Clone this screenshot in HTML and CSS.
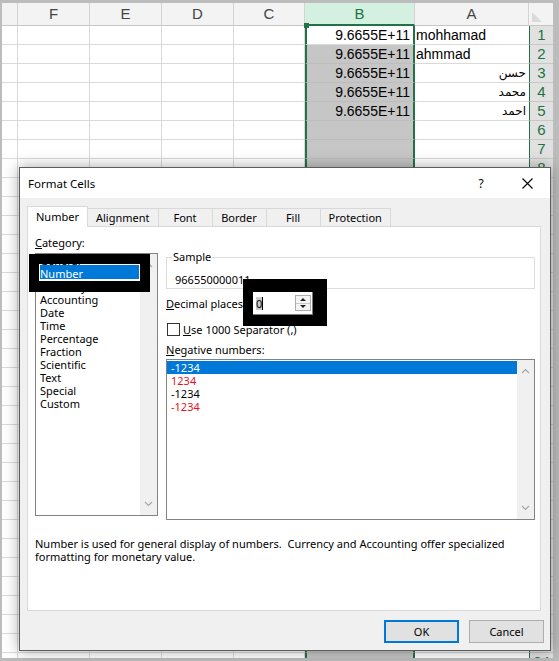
FILE: index.html
```html
<!DOCTYPE html>
<html lang="en">
<head>
    <meta charset="UTF-8">
    <meta name="viewport" content="width=device-width, initial-scale=1.0">
    <title>Format Cells</title>
    <link rel="stylesheet" href="styles.css">
</head>
<body>
    <div class="sheet">
        <div class="grid" id="grid"></div>
    </div>

    <div class="dialog">
        <div class="titlebar">
            <span class="title">Format Cells</span>
            <span class="help">?</span>
            <span class="close">
                <svg width="11" height="11" viewBox="0 0 11 11"><path d="M0.5 0.5 L10.5 10.5 M10.5 0.5 L0.5 10.5" stroke="#000" stroke-width="1.1" fill="none"/></svg>
            </span>
        </div>
        <div class="dlg-body">
            <div class="tabs">
                <div class="tab active">Number</div>
                <div class="tab">Alignment</div>
                <div class="tab">Font</div>
                <div class="tab">Border</div>
                <div class="tab">Fill</div>
                <div class="tab">Protection</div>
            </div>
            <div class="panel">
                <div class="columns">
                    <div class="cat-col">
                        <div class="lbl"><u>C</u>ategory:</div>
                        <div class="listbox cat-list">
                            <div class="items">
                                <div class="item">General</div>
                                <div class="item sel focus">Number</div>
                                <div class="item">Currency</div>
                                <div class="item">Accounting</div>
                                <div class="item">Date</div>
                                <div class="item">Time</div>
                                <div class="item">Percentage</div>
                                <div class="item">Fraction</div>
                                <div class="item">Scientific</div>
                                <div class="item">Text</div>
                                <div class="item">Special</div>
                                <div class="item">Custom</div>
                            </div>
                            <div class="vscroll">
                                <svg width="9" height="6" viewBox="0 0 9 6"><polyline points="1,5 4.5,1.5 8,5" fill="none" stroke="#a6a6a6" stroke-width="1.2"/></svg>
                                <svg width="9" height="6" viewBox="0 0 9 6"><polyline points="1,1 4.5,4.5 8,1" fill="none" stroke="#a6a6a6" stroke-width="1.2"/></svg>
                            </div>
                        </div>
                    </div>
                    <div class="opt-col">
                        <fieldset class="sample">
                            <legend>Sample</legend>
                            <div class="sample-val">966550000011</div>
                        </fieldset>
                        <div class="dec-row">
                            <label class="dec-label"><u>D</u>ecimal places:</label>
                            <div class="spin">
                                <span class="spin-val">0</span><span class="caret"></span>
                                <div class="spin-btns">
                                    <div class="spin-up"></div>
                                    <div class="spin-down"></div>
                                </div>
                            </div>
                        </div>
                        <div class="check-row">
                            <span class="checkbox"></span>
                            <span><u>U</u>se 1000 Separator (,)</span>
                        </div>
                        <div class="lbl neg-lbl"><u>N</u>egative numbers:</div>
                        <div class="listbox neg-list">
                            <div class="items">
                                <div class="item sel">-1234</div>
                                <div class="item red">1234</div>
                                <div class="item">-1234</div>
                                <div class="item red">-1234</div>
                            </div>
                            <div class="vscroll">
                                <svg width="9" height="6" viewBox="0 0 9 6"><polyline points="1,5 4.5,1.5 8,5" fill="none" stroke="#a6a6a6" stroke-width="1.2"/></svg>
                                <svg width="9" height="6" viewBox="0 0 9 6"><polyline points="1,1 4.5,4.5 8,1" fill="none" stroke="#a6a6a6" stroke-width="1.2"/></svg>
                            </div>
                        </div>
                    </div>
                </div>
                <p class="desc">Number is used for general display of numbers.&nbsp; Currency and Accounting offer specialized<br>formatting for monetary value.</p>
            </div>
            <div class="buttons">
                <button type="button" class="btn default">OK</button>
                <button type="button" class="btn">Cancel</button>
            </div>
        </div>

        <!-- black highlight frames -->
        <div class="mark mark-cat"></div>
        <div class="mark mark-dec"></div>
    </div>

    <script>
        // Build the worksheet (right-to-left sheet: column A sits next to the row numbers)
        const letters = ['', 'F', 'E', 'D', 'C', 'B', 'A'];
        const values = {
            1: ['9.6655E+11', 'mohhamad'],
            2: ['9.6655E+11', 'ahmmad'],
            3: ['9.6655E+11', 'حسن'],
            4: ['9.6655E+11', 'محمد'],
            5: ['9.6655E+11', 'احمد']
        };

        let html = '';
        letters.forEach(l => {
            html += '<div class="hd' + (l === 'B' ? ' hd-sel' : '') + '">' + l + '</div>';
        });
        html += '<div class="hd corner"><svg width="10" height="10" viewBox="0 0 10 10"><polygon points="0,0 0,10 10,10" fill="#dadada"/></svg></div>';

        for (let r = 1; r <= 34; r++) {
            const v = values[r] || ['', ''];
            const arabic = /[\u0600-\u06FF]/.test(v[1]);
            html += '<div class="cell"></div>'.repeat(5);
            html += '<div class="cell colb' + (r === 1 ? ' active' : '') + '">' + v[0] + '</div>';
            html += '<div class="cell cola' + (arabic ? ' ar' : '') + '">' + v[1] + '</div>';
            html += '<div class="rh">' + r + '</div>';
        }
        document.getElementById('grid').innerHTML = html;
    </script>
</body>
</html>
```

FILE: styles.css
```css
html, body {
    margin: 0;
}
body {
    position: relative;
    width: 559px;
    height: 661px;
    box-sizing: border-box;
    padding: 3px 6px 3px 2px;
    background: #bcbcbc;
    overflow: hidden;
}

/* worksheet */
.sheet {
    width: 551px;
    height: 655px;
    background: #fff;
    overflow: hidden;
}
.grid {
    display: grid;
    grid-template-columns: 16px 72px 72px 72px 71px 110px 114px 24px;
    grid-template-rows: 23px;
    grid-auto-rows: 19px;
}
.grid > div {
    box-sizing: border-box;
}
.hd {
    background: #f3f3f3;
    border-right: 1px solid #d4d4d4;
    border-bottom: 1px solid #c6c6c6;
    font: 15px "Liberation Sans", Arial, sans-serif;
    color: #444;
    text-align: center;
    line-height: 22px;
}
.hd-sel {
    background: #d3f0e0;
    color: #217346;
    border-bottom: 2px solid #217346;
}
.corner {
    display: flex;
    align-items: flex-end;
    padding: 0 0 3px 3px;
    border-right: none;
}
.cell {
    border-right: 1px solid #dadada;
    border-bottom: 1px solid #dadada;
    font: 14px "Liberation Sans", Arial, sans-serif;
    line-height: 18px;
    padding: 0 2px;
    white-space: nowrap;
    overflow: hidden;
    color: #000;
}
.colb {
    position: relative;
    overflow: visible;
    background: #c6c6c6;
    border-left: 2px solid #217346;
    border-right: 2px solid #217346;
    border-bottom-color: #bdbdbd;
    text-align: right;
    padding-right: 3px;
}
.colb.active {
    background: #fff;
    border-bottom-color: #dadada;
}
.colb.active::before {
    content: "";
    position: absolute;
    left: -3px;
    top: -3px;
    width: 5px;
    height: 5px;
    background: #217346;
}
.cola {
    border-right: none;
    padding-left: 1px;
}
.cola.ar {
    direction: rtl;
    text-align: right;
    padding-right: 3px;
    font: 12px "DejaVu Sans", sans-serif;
    line-height: 18px;
}
.rh {
    background: #e1e1e1;
    color: #217346;
    border-left: 1px solid #217346;
    border-bottom: 1px solid #c8c8c8;
    font: 15px "Liberation Sans", Arial, sans-serif;
    line-height: 18px;
    text-align: center;
}

/* dialog window */
.dialog {
    position: absolute;
    left: 19px;
    top: 167px;
    width: 532px;
    height: 484px;
    box-sizing: border-box;
    border: 1px solid #5c5c5c;
    background: #f0f0f0;
    box-shadow: 0 0 14px rgba(0, 0, 0, 0.35);
    font: 11px "Noto Sans", sans-serif;
    color: #000;
}
.titlebar {
    height: 30px;
    background: #fff;
    display: flex;
    align-items: center;
}
.title {
    flex: 1;
    padding-left: 8px;
    font-size: 11.5px;
}
.help, .close {
    width: 46px;
    text-align: center;
}
.help {
    font-size: 12px;
}
.close svg {
    display: block;
    margin: 0 auto;
}
.dlg-body {
    padding: 8px 6px 0 7px;
}
.tabs {
    display: flex;
    align-items: flex-end;
    height: 20px;
}
.tab {
    box-sizing: border-box;
    height: 18px;
    min-width: 55px;
    padding: 0 8px;
    border: 1px solid #d9d9d9;
    border-bottom: none;
    margin-right: -1px;
    text-align: center;
    line-height: 17px;
}
.tab.active {
    height: 21px;
    margin-bottom: -1px;
    background: #fff;
    position: relative;
    z-index: 1;
    line-height: 20px;
}
.panel {
    box-sizing: border-box;
    width: 514px;
    height: 385px;
    background: #fff;
    border: 1px solid #d9d9d9;
    padding: 9px 5px 0 7px;
}
.columns {
    display: flex;
    align-items: flex-start;
}
.cat-col {
    width: 123px;
}
.opt-col {
    width: 369px;
    margin-left: 8px;
}
.lbl {
    line-height: 14px;
}
.listbox {
    display: flex;
    box-sizing: border-box;
    border: 1px solid #828282;
    background: #fff;
    overflow: hidden;
}
.listbox .items {
    flex: 1;
}
.item {
    height: 13px;
    line-height: 13px;
    white-space: nowrap;
}
.item.sel {
    background: #0078d7;
    color: #fff;
}
.vscroll {
    width: 17px;
    background: #f0f0f0;
    display: flex;
    flex-direction: column;
    justify-content: space-between;
    align-items: center;
    padding: 8px 0;
}
.cat-list {
    margin-top: 3px;
    height: 263px;
}
.cat-list .items {
    padding-left: 3px;
}
.cat-list .item {
    padding-left: 1px;
}
.cat-list .item.sel {
    height: 16px;
    margin-top: -3px;
    padding-top: 3px;
    box-sizing: border-box;
    line-height: 13px;
}
.item.focus {
    box-shadow: inset 0 0 0 1px #fff;
}
.neg-list {
    margin-top: 2px;
    height: 161px;
}
.neg-list .items {
    padding-top: 1px;
}
.neg-list .item {
    padding-left: 4px;
}
.item.red {
    color: #e81123;
}
.neg-lbl {
    margin-top: 7px;
}

.sample {
    margin: 14px 0 0;
    padding: 9px 7px 1px 8px;
    border: 1px solid #dcdcdc;
    min-width: 0;
}
.sample legend {
    padding: 0 1px;
    margin-left: -3px;
    line-height: 14px;
}
.sample-val {
    line-height: 14px;
}
.dec-row {
    display: flex;
    align-items: center;
    height: 24px;
    margin-top: 2px;
}
.dec-label {
    width: 84px;
    white-space: nowrap;
    padding-top: 1px;
}
.spin {
    box-sizing: border-box;
    width: 63px;
    height: 24px;
    border: 1px solid #7a7a7a;
    display: flex;
    align-items: center;
    padding-left: 5px;
}
.spin-val {
    background: #cccccc;
    line-height: 13px;
}
.caret {
    width: 1px;
    height: 13px;
    background: #000;
}
.spin-btns {
    margin-left: auto;
    margin-right: 1px;
    width: 16px;
    height: 16px;
    box-sizing: border-box;
    border: 1px solid #adadad;
    display: flex;
    flex-direction: column;
}
.spin-up, .spin-down {
    flex: 1;
    background: #f4f4f4;
    display: flex;
    align-items: center;
    justify-content: center;
}
.spin-up {
    border-bottom: 1px solid #c9c9c9;
}
.spin-up::after, .spin-down::after {
    content: "";
    border-left: 3px solid transparent;
    border-right: 3px solid transparent;
}
.spin-up::after {
    border-bottom: 3px solid #222;
}
.spin-down::after {
    border-top: 3px solid #222;
}
.check-row {
    display: flex;
    align-items: center;
    height: 14px;
    margin-top: 7px;
}
.checkbox {
    box-sizing: border-box;
    width: 13px;
    height: 13px;
    border: 1px solid #333;
    margin: 0 3px 0 1px;
}
.desc {
    margin: 17px 0 0;
    line-height: 13px;
}
.buttons {
    display: flex;
    justify-content: flex-end;
    gap: 10px;
    margin-top: 9px;
}
.btn {
    box-sizing: border-box;
    width: 75px;
    height: 23px;
    background: #e1e1e1;
    border: 1px solid #adadad;
    font: 11px "Noto Sans", sans-serif;
    color: #000;
    padding: 0;
}
.btn.default {
    border: 2px solid #0078d7;
}

.mark {
    position: absolute;
    box-sizing: border-box;
    border-style: solid;
    border-color: #000;
}
.mark-cat {
    left: 9px;
    top: 86px;
    width: 121px;
    height: 38px;
    border-width: 10px 10px 11px 10px;
}
.mark-dec {
    left: 223px;
    top: 111px;
    width: 84px;
    height: 47px;
    border-width: 13px 14px 11px 10px;
}
```
